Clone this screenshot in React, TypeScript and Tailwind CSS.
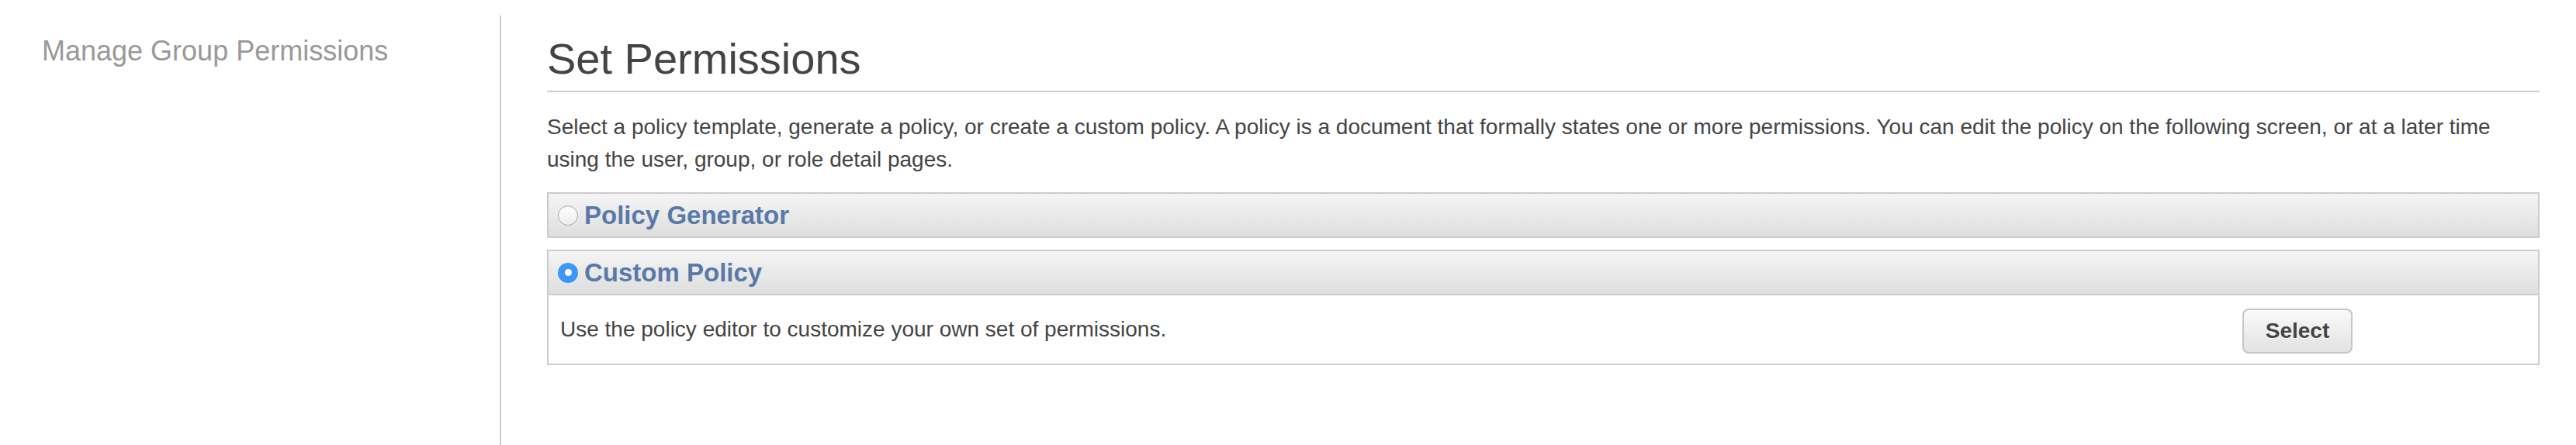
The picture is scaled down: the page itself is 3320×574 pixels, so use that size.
import React from "react";

function Radio({ checked }: { checked?: boolean }) {
  if (checked) {
    return (
      <span className="flex h-[26px] w-[26px] shrink-0 items-center justify-center rounded-full bg-[#3b97f8]">
        <span className="h-[9px] w-[9px] rounded-full bg-white" />
      </span>
    );
  }
  return (
    <span className="h-[26px] w-[26px] shrink-0 rounded-full border-[1.5px] border-[#aaaaaa] bg-linear-to-b from-[#ffffff] to-[#ededed] shadow-[inset_0_1px_1px_rgba(0,0,0,0.08)]" />
  );
}

export default function App() {
  return (
    <div className="flex min-h-[574px] bg-white font-['Liberation_Sans',Arial,Helvetica,sans-serif]">
      <aside className="w-[644px] shrink-0 pl-[54px] pt-[44px]">
        <div className="text-[36px] leading-[44px] text-[#999999]">Manage Group Permissions</div>
      </aside>
      <main className="mt-[20px] flex-1 border-l-2 border-[#cccccc] pl-[59px] pr-[47px] pt-[24px]">
        <h1 className="border-b-2 border-[#cccccc] pb-[9px] text-[56px] font-normal leading-[64px] text-[#444444]">
          Set Permissions
        </h1>
        <p className="mt-[24px] text-[28px] leading-[42px] text-[#444444]">
          Select a policy template, generate a policy, or create a custom policy. A policy is a document that formally states one or more permissions. You can edit the policy on the following screen, or at a later time using the user, group, or role detail pages.
        </p>
        <div className="mt-[21px] flex h-[59px] items-center gap-[8px] border-2 border-[#cccccc] bg-linear-to-b from-[#f5f5f5] to-[#dedede] px-[12px]">
          <Radio />
          <span className="text-[33px] font-bold leading-none text-[#587aa8]">Policy Generator</span>
        </div>
        <div className="mt-[15px] border-2 border-[#cccccc]">
          <div className="flex h-[57px] items-center gap-[8px] border-b-2 border-[#cccccc] bg-linear-to-b from-[#f5f5f5] to-[#dedede] px-[12px]">
            <Radio checked />
            <span className="text-[33px] font-bold leading-none text-[#587aa8]">Custom Policy</span>
          </div>
          <div className="flex h-[88px] items-center justify-between pl-[15px] pr-[239px]">
            <span className="text-[28px] leading-[42px] text-[#444444]">
              Use the policy editor to customize your own set of permissions.
            </span>
            <button className="mt-[4px] h-[58px] w-[142px] rounded-[8px] border-2 border-[#c6c6c6] bg-linear-to-b from-[#fafafa] to-[#e2e2e2] text-[28px] font-bold text-[#444444] [text-shadow:0_1px_0_#ffffff]">
              Select
            </button>
          </div>
        </div>
      </main>
    </div>
  );
}
